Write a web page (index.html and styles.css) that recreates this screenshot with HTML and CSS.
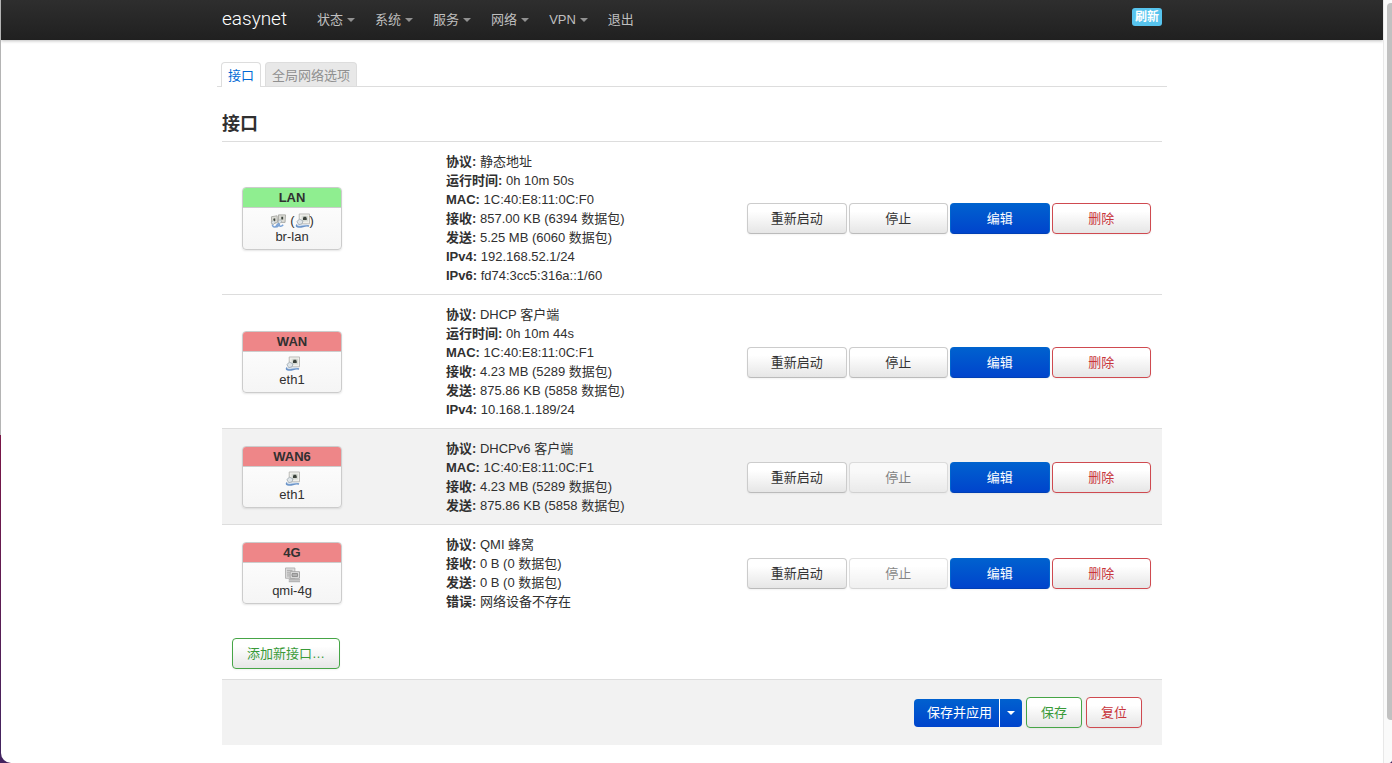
FILE: index.html
```html
<!DOCTYPE html>
<html lang="zh-CN">
<head>
<meta charset="utf-8">
<title>easynet - 接口</title>
<link rel="stylesheet" href="styles.css">
</head>
<body>
<svg class="defs" aria-hidden="true">
  <defs>
    <symbol id="ethernet" viewBox="0 0 16 16">
      <path d="M4.500 .5h11v10.500h-11z" fill="#f0f0ec" stroke="#b9b9b5"/>
      <path d="M7 2.500h7v6H7z" fill="#d6dad4"/>
      <path d="M9 3.500h3v1h.5v2.500H8.500V4.500H9z" fill="#3b423b"/>
      <path d="M2 8.500l3-2.500 3.500 2-1 3-3.500 1z" fill="#dfe5e9" stroke="#98a4ac" stroke-width=".8"/>
      <path d="M2.500 12c-2 1.500 0 2.500 2 2.300 4 .2 5-2 10.500-1" fill="none" stroke="#6a93c8" stroke-width="1.800"/>
      <path d="M3 13c3 1 6-1.500 10-.6" fill="none" stroke="#a9c6e8" stroke-width=".7"/>
    </symbol>
    <symbol id="bridge" viewBox="0 0 17 16">
      <path d="M1.500 3.500l6-1 .5 7-6 2z" fill="#dcdcd6" stroke="#aaaaa4"/>
      <path d="M3.500 5.500l2-.4.2 2.600-2 .6z" fill="#3b423b"/>
      <path d="M9 1.500h7.500l-.5 8H9z" fill="#dcdcd6" stroke="#aaaaa4"/>
      <path d="M12 3.500h2v3h-2z" fill="#3b423b"/>
      <path d="M1 9l3-1.500 1.500 2-2 2.500zM8.500 8l2.500-1.500 1.500 2.500-3 2z" fill="#dfe5e9" stroke="#98a4ac" stroke-width=".6"/>
      <path d="M2.500 12c1 4 4 2 5 0s3-1 2 .5-3 2-5 2M10 11c-1 3 2 3.500 4 1" fill="none" stroke="#7ba3d6" stroke-width="1.600"/>
    </symbol>
    <symbol id="modem" viewBox="0 0 16 16">
      <path d="M.5 .5h10v11H.5z" fill="#dedede" stroke="#b0b0b0"/>
      <path d="M2 3h6M2 5h3M2 7h3M2 9h3" stroke="#a5a5a5"/>
      <path d="M5.500 4.500h10v7h-10z" fill="#e6e6e6" stroke="#a0a0a0"/>
      <path d="M7.500 6.500h6v3h-6z" fill="#b5b5b5" stroke="#888"/>
      <path d="M4 13h12M4 15h12" stroke="#b5b5b5" stroke-width="1.500"/>
    </symbol>
  </defs>
</svg>
<div class="window">
  <div class="page">
    <header class="topbar">
      <div class="container topbar-inner">
        <a class="brand" href="#">easynet</a>
        <nav class="nav">
          <a class="menu" href="#">状态</a>
          <a class="menu" href="#">系统</a>
          <a class="menu" href="#">服务</a>
          <a class="menu" href="#">网络</a>
          <a class="menu" href="#">VPN</a>
          <a href="#">退出</a>
        </nav>
        <button class="refresh" type="button">刷新</button>
      </div>
    </header>
    <main class="container">
      <nav class="tabs">
        <a class="tab active" href="#">接口</a>
        <a class="tab" href="#">全局网络选项</a>
      </nav>
      <h1>接口</h1>
      <table class="interfaces">
        <colgroup><col class="col-name"><col class="col-info"><col></colgroup>
        <tbody>
          <tr>
            <td><div class="ifbox up"><div class="ifhead">LAN</div><div class="ifbody"><div class="icons"><svg class="icon wide"><use href="#bridge"/></svg><span class="group">(<svg class="icon"><use href="#ethernet"/></svg>)</span></div>br-lan</div></div></td>
            <td><b>协议:</b> 静态地址<br><b>运行时间:</b> 0h 10m 50s<br><b>MAC:</b> 1C:40:E8:11:0C:F0<br><b>接收:</b> 857.00 KB (6394 数据包)<br><b>发送:</b> 5.25 MB (6060 数据包)<br><b>IPv4:</b> 192.168.52.1/24<br><b>IPv6:</b> fd74:3cc5:316a::1/60</td>
            <td><div class="actions"><button class="btn" type="button">重新启动</button><button class="btn" type="button">停止</button><button class="btn primary" type="button">编辑</button><button class="btn danger" type="button">删除</button></div></td>
          </tr>
          <tr>
            <td><div class="ifbox"><div class="ifhead">WAN</div><div class="ifbody"><div class="icons"><svg class="icon"><use href="#ethernet"/></svg></div>eth1</div></div></td>
            <td><b>协议:</b> DHCP 客户端<br><b>运行时间:</b> 0h 10m 44s<br><b>MAC:</b> 1C:40:E8:11:0C:F1<br><b>接收:</b> 4.23 MB (5289 数据包)<br><b>发送:</b> 875.86 KB (5858 数据包)<br><b>IPv4:</b> 10.168.1.189/24</td>
            <td><div class="actions"><button class="btn" type="button">重新启动</button><button class="btn" type="button">停止</button><button class="btn primary" type="button">编辑</button><button class="btn danger" type="button">删除</button></div></td>
          </tr>
          <tr class="shaded">
            <td><div class="ifbox"><div class="ifhead">WAN6</div><div class="ifbody"><div class="icons"><svg class="icon"><use href="#ethernet"/></svg></div>eth1</div></div></td>
            <td><b>协议:</b> DHCPv6 客户端<br><b>MAC:</b> 1C:40:E8:11:0C:F1<br><b>接收:</b> 4.23 MB (5289 数据包)<br><b>发送:</b> 875.86 KB (5858 数据包)</td>
            <td><div class="actions"><button class="btn" type="button">重新启动</button><button class="btn" type="button" disabled>停止</button><button class="btn primary" type="button">编辑</button><button class="btn danger" type="button">删除</button></div></td>
          </tr>
          <tr>
            <td><div class="ifbox"><div class="ifhead">4G</div><div class="ifbody"><div class="icons"><svg class="icon"><use href="#modem"/></svg></div>qmi-4g</div></div></td>
            <td><b>协议:</b> QMI 蜂窝<br><b>接收:</b> 0 B (0 数据包)<br><b>发送:</b> 0 B (0 数据包)<br><b>错误:</b> 网络设备不存在</td>
            <td><div class="actions"><button class="btn" type="button">重新启动</button><button class="btn" type="button" disabled>停止</button><button class="btn primary" type="button">编辑</button><button class="btn danger" type="button">删除</button></div></td>
          </tr>
        </tbody>
      </table>
      <div class="create"><button class="btn positive" type="button">添加新接口…</button></div>
      <div class="page-actions">
        <div class="split"><button class="apply" type="button">保存并应用</button><button class="toggle" type="button" aria-label="更多选项"></button></div>
        <button class="btn positive" type="button">保存</button>
        <button class="btn danger" type="button">复位</button>
      </div>
    </main>
  </div>
  <div class="scrollbar"><div class="thumb"></div></div>
</div>
</body>
</html>
```
FILE: styles.css
```css
* { box-sizing: border-box; }

body {
  margin: 0;
  padding-left: 1px;
  min-height: 100vh;
  background: linear-gradient(#b4b4b4 0 57%, #7a1546 57%, #43245f 98%);
  color: #303030;
  font: 13px/19px "Liberation Sans", "Noto Sans CJK SC", sans-serif;
}

.defs { position: absolute; width: 0; height: 0; }

.window {
  display: flex;
  min-height: 100vh;
  overflow: hidden;
  background: #fff;
  border-radius: 0 0 4px 10px;
}

.page { flex: 1; min-width: 0; }

.container {
  max-width: 940px;
  margin: 0 auto;
}

.topbar {
  height: 40px;
  background: linear-gradient(#2e2e2e, #202020);
  box-shadow: 0 1px 3px rgba(0, 0, 0, .25);
}

.topbar-inner {
  display: flex;
  align-items: flex-start;
}

.brand {
  padding-right: 20px;
  color: #fff;
  font: 300 19px/38px Roboto, sans-serif;
  text-decoration: none;
}

.nav { display: flex; flex: 1; }

.nav a {
  display: flex;
  align-items: center;
  padding: 0 10px;
  color: #bfbfbf;
  line-height: 40px;
  text-decoration: none;
}

.menu::after,
.toggle::after {
  content: "";
  border: 4px solid transparent;
  border-top-color: currentColor;
  border-bottom: 0;
}

.menu::after { margin-left: 4px; opacity: .7; }

.refresh {
  margin-top: 8px;
  padding: 0 3px;
  border: 0;
  border-radius: 3px;
  background: #57c4ee;
  color: #fff;
  font: bold 12px/18px "Liberation Sans", "Noto Sans CJK SC", sans-serif;
}

.tabs {
  display: flex;
  gap: 4px;
  margin: 22px -5px 0;
  padding-left: 4px;
  border-bottom: 1px solid #ddd;
}

.tab {
  height: 24px;
  padding: 0 6px;
  border: 1px solid #ddd;
  border-bottom: 0;
  border-radius: 4px 4px 0 0;
  background: #e8e8e8;
  color: #909090;
  line-height: 25px;
  text-decoration: none;
}

.tab.active {
  height: 25px;
  margin-bottom: -1px;
  background: #fff;
  color: #0069d6;
}

h1 {
  margin: 20px 0 0;
  font-size: 18px;
  line-height: 34px;
}

.interfaces {
  width: 100%;
  border-collapse: separate;
  border-spacing: 0;
  table-layout: fixed;
}

.col-name { width: 214px; }
.col-info { width: 301px; }

.interfaces td {
  padding: 10px 10px 9px;
  border-top: 1px solid #ddd;
  vertical-align: middle;
}

.shaded { background: #f2f2f2; }

.ifbox {
  width: 100px;
  margin-left: 10px;
  overflow: hidden;
  border: 1px solid #ccc;
  border-radius: 4px;
  background: linear-gradient(#fff, #f5f5f5);
  box-shadow: 0 1px 2px rgba(0, 0, 0, .1);
  text-align: center;
}

.ifhead {
  border-bottom: 1px solid #ccc;
  background: #ee8688;
  font-weight: bold;
}

.up .ifhead { background: #8fee90; }

.ifbody {
  padding: 4px 0;
  line-height: 16px;
}

.up .ifbody { padding-top: 5px; }

.icons {
  display: flex;
  justify-content: center;
  gap: 4px;
}

.group { display: flex; }

.icon { width: 15px; height: 16px; }
.icon.wide { width: 16px; }

.actions {
  display: flex;
  gap: 2px;
  margin-right: 1px;
}

.actions .btn { flex: 1; }

.btn {
  padding: 6px 14px 5px;
  border: 1px solid #ccc;
  border-bottom-color: #bbb;
  border-radius: 4px;
  background: linear-gradient(#fff 25%, #e6e6e6);
  box-shadow: 0 1px 2px rgba(0, 0, 0, .05);
  color: #333;
  font: 13px/18px "Liberation Sans", "Noto Sans CJK SC", sans-serif;
}

.btn:disabled { opacity: .6; }

.primary {
  border-color: #0064cd #0064cd #003fb5;
  background: linear-gradient(#0061cf, #0044cc);
  color: #fff;
}

.danger { border-color: #cf4a50; color: #c8343b; }
.positive { border-color: #46a546; color: #389a38; }

.create { padding: 18px 10px 10px; }

.page-actions {
  display: flex;
  align-items: center;
  justify-content: flex-end;
  gap: 4px;
  padding: 17px 20px;
  border-top: 1px solid #ddd;
  background: #f2f2f2;
}

.split {
  display: flex;
  height: 28px;
  overflow: hidden;
  border-radius: 4px;
}

.apply,
.toggle {
  border: 0;
  background: linear-gradient(#0061cf, #0044cc);
  color: #fff;
  font: 13px/26px "Liberation Sans", "Noto Sans CJK SC", sans-serif;
}

.apply { padding: 0 7px 0 13px; }

.toggle {
  display: flex;
  align-items: center;
  padding: 0 7px;
  border-left: 1px solid #fff;
}

.scrollbar {
  width: 9px;
  height: 100vh;
  padding: 3px 0 43px 3px;
  border-left: 1px solid #e8e8e8;
  background: #fafafa;
}

.thumb {
  height: 100%;
  border-radius: 4px 0 0 4px;
  background: #c1c1c1;
}
```
